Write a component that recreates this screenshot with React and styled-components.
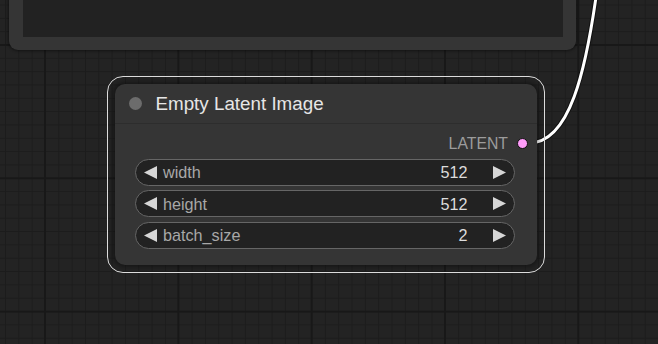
import React from 'react';
import styled, { createGlobalStyle } from 'styled-components';

const GlobalStyle = createGlobalStyle`
    html, body {
        margin: 0;
        padding: 0;
        background: #222;
    }
    body {
        font-family: "Liberation Sans", Arial, sans-serif;
    }
`

const widgets = [
    { name: 'width', value: 512 },
    { name: 'height', value: 512 },
    { name: 'batch_size', value: 2 },
]

function Arrow({ dir }) {
    return (
        <ArrowIcon width="13" height="13" viewBox="0 0 13 13">
            {dir === 'left'
                ? <polygon points="13,0 13,13 0,6.5" fill="#d6d6d6" />
                : <polygon points="0,0 0,13 13,6.5" fill="#d6d6d6" />}
        </ArrowIcon>
    )
}

function NumberWidget({ name, value }) {
    return (
        <Widget>
            <Arrow dir="left" />
            <WidgetLabel>{name}</WidgetLabel>
            <WidgetValue>{value}</WidgetValue>
            <Arrow dir="right" />
        </Widget>
    )
}

export default function App() {
    return (
        <>
            <GlobalStyle />
            <Canvas>
                <UpperNode>
                    <UpperNodeInner />
                </UpperNode>

                <Wire width="658" height="344" viewBox="0 0 658 344">
                    <path d="M529 143 C 570 143, 586 70, 597 -10" stroke="#111" strokeWidth="5" fill="none" />
                    <path d="M529 143 C 570 143, 586 70, 597 -10" stroke="#fff" strokeWidth="3" fill="none" />
                </Wire>

                <Selection>
                    <Node>
                        <TitleBar>
                            <TitleDot />
                            <Title>Empty Latent Image</Title>
                        </TitleBar>
                        <OutputRow>
                            <SlotLabel>LATENT</SlotLabel>
                            <SlotDot />
                        </OutputRow>
                        <Widgets>
                            {widgets.map(w => (
                                <NumberWidget key={w.name} name={w.name} value={w.value} />
                            ))}
                        </Widgets>
                    </Node>
                </Selection>
            </Canvas>
        </>
    )
}

const Canvas = styled.div`
    position: relative;
    width: 658px;
    height: 344px;
    overflow: hidden;
    background-color: #232323;
    background-image:
        linear-gradient(to right, #181818 2px, transparent 2px),
        linear-gradient(to bottom, #181818 2px, transparent 2px),
        linear-gradient(to right, #1c1c1c 1px, transparent 1px),
        linear-gradient(to bottom, #1c1c1c 1px, transparent 1px);
    background-size: 133.33px 133.33px, 133.33px 133.33px, 13.333px 13.333px, 13.333px 13.333px;
    background-position: 44px 44px, 44px 44px, 5px 4.5px, 5px 4.5px;
`

const UpperNode = styled.div`
    position: absolute;
    left: 9px;
    top: -20px;
    width: 567px;
    height: 70px;
    background: #353535;
    border-radius: 0 0 9px 9px;
    box-shadow: 0 0 3px 1px rgba(0,0,0,.45);
    padding: 0 13px 0 14px;
    box-sizing: border-box;
`

const UpperNodeInner = styled.div`
    height: 57px;
    background: #222;
`

const Wire = styled.svg`
    position: absolute;
    left: 0;
    top: 0;
    pointer-events: none;
`

const Selection = styled.div`
    position: absolute;
    left: 107px;
    top: 75.5px;
    padding: 7px;
    border: 1.5px solid #dcdcdc;
    border-radius: 16px;
`

const Node = styled.div`
    width: 422px;
    height: 181px;
    background: #353535;
    border-radius: 10px;
    box-shadow: 0 0 4px 2px rgba(0,0,0,.35);
    display: flex;
    flex-direction: column;
`

const TitleBar = styled.div`
    height: 40px;
    box-sizing: border-box;
    border-bottom: 1px solid #2d2d2d;
    display: flex;
    align-items: center;
    gap: 14px;
    padding: 1px 0 0 13.5px;
`

const TitleDot = styled.div`
    width: 13px;
    height: 13px;
    border-radius: 50%;
    background: #6c6c6c;
`

const Title = styled.div`
    color: #e6e6e6;
    font-size: 18.8px;
    line-height: 1;
    padding-top: 2px;
`

const OutputRow = styled.div`
    height: 30px;
    padding-top: 5px;
    display: flex;
    align-items: center;
    justify-content: flex-end;
    gap: 9px;
    padding-right: 9px;
`

const SlotLabel = styled.div`
    color: #9c9c9c;
    font-size: 15.8px;
    line-height: 1;
    padding-top: 1px;
`

const SlotDot = styled.div`
    width: 9px;
    height: 9px;
    border-radius: 50%;
    background: #ff9cf9;
    border: 1px solid #111;
`

const Widgets = styled.div`
    display: flex;
    flex-direction: column;
    gap: 4.7px;
    padding: 0 22.5px 0 20px;
`

const Widget = styled.div`
    height: 27px;
    box-sizing: border-box;
    border: 1px solid #666;
    border-radius: 14px;
    background: #222;
    display: flex;
    align-items: center;
    padding: 0 8px 0 8px;
`

const ArrowIcon = styled.svg`
    display: block;
    flex: none;
`

const WidgetLabel = styled.span`
    flex: 1;
    margin-left: 6px;
    color: #a8a8a8;
    font-size: 16.2px;
    padding-top: 1px;
`

const WidgetValue = styled.span`
    margin-right: 25px;
    color: #dcdcdc;
    font-size: 16.2px;
    padding-top: 1px;
`
